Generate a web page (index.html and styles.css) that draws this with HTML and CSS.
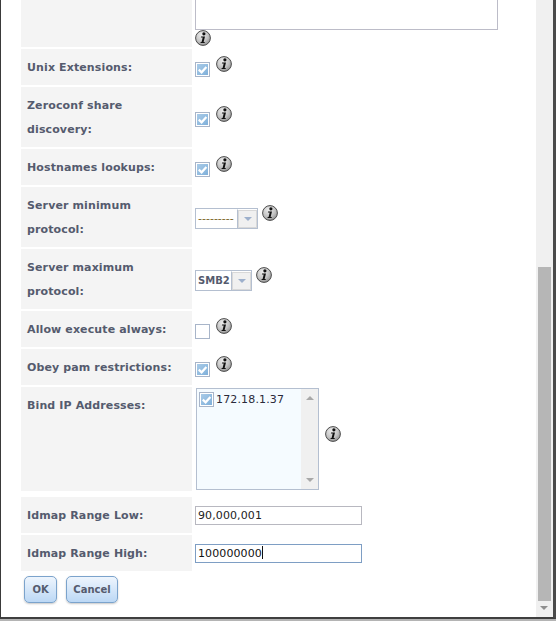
FILE: index.html
```html
<!DOCTYPE html>
<html lang="en">
<head>
    <meta charset="UTF-8">
    <title>CIFS Settings</title>
    <link rel="stylesheet" href="styles.css">
</head>
<body>
    <svg class="defs" width="0" height="0">
        <defs>
            <radialGradient id="infoFill" cx="40%" cy="30%" r="80%">
                <stop offset="0" stop-color="#ececec"/>
                <stop offset="0.55" stop-color="#c4c4c4"/>
                <stop offset="1" stop-color="#858585"/>
            </radialGradient>
            <linearGradient id="tickFill" x1="0" y1="0" x2="1" y2="1">
                <stop offset="0" stop-color="#a9cbe8"/>
                <stop offset="1" stop-color="#7fb0da"/>
            </linearGradient>
            <symbol id="info" viewBox="0 0 16 16">
                <circle cx="8" cy="8" r="7.4" fill="url(#infoFill)" stroke="#4c4c4c" stroke-width="1"/>
                <circle cx="8.9" cy="3.8" r="1.6" fill="#111"/>
                <path d="M6.1 6.4h3.9l-1.4 5.5h1.2l-.2 1H5.5l.2-1h.9l1.1-4.5H5.9z" fill="#111"/>
            </symbol>
            <symbol id="tick" viewBox="0 0 15 15">
                <rect x="0.5" y="0.5" width="14" height="14" fill="#fff" stroke="#a8b5c9"/>
                <rect x="2" y="2" width="11" height="11" fill="url(#tickFill)"/>
                <path d="M3.8 7.6l2.8 2.7 4.8-5.4" fill="none" stroke="#fff" stroke-width="2.2"/>
            </symbol>
        </defs>
    </svg>

    <div class="window">
        <div class="content">
            <div class="row rowFirst">
                <div class="label"></div>
                <div class="field fieldStack">
                    <div class="textarea"></div>
                    <svg class="info infoFlat"><use href="#info"/></svg>
                </div>
            </div>
            <div class="row rowShort">
                <div class="label">Unix Extensions:</div>
                <div class="field">
                    <svg class="check"><use href="#tick"/></svg>
                    <svg class="info"><use href="#info"/></svg>
                </div>
            </div>
            <div class="row rowTall">
                <div class="label">Zeroconf share discovery:</div>
                <div class="field">
                    <svg class="check"><use href="#tick"/></svg>
                    <svg class="info"><use href="#info"/></svg>
                </div>
            </div>
            <div class="row rowShort">
                <div class="label">Hostnames lookups:</div>
                <div class="field">
                    <svg class="check"><use href="#tick"/></svg>
                    <svg class="info"><use href="#info"/></svg>
                </div>
            </div>
            <div class="row rowTall">
                <div class="label">Server minimum protocol:</div>
                <div class="field">
                    <div class="select">
                        <span class="selectText selectWide">---------</span>
                        <span class="selectArrow"><i></i></span>
                    </div>
                    <svg class="info infoSelect"><use href="#info"/></svg>
                </div>
            </div>
            <div class="row rowTall">
                <div class="label">Server maximum protocol:</div>
                <div class="field">
                    <div class="select">
                        <span class="selectText">SMB2</span>
                        <span class="selectArrow"><i></i></span>
                    </div>
                    <svg class="info infoSelect"><use href="#info"/></svg>
                </div>
            </div>
            <div class="row rowShort">
                <div class="label">Allow execute always:</div>
                <div class="field">
                    <span class="checkEmpty"></span>
                    <svg class="info"><use href="#info"/></svg>
                </div>
            </div>
            <div class="row rowShort">
                <div class="label">Obey pam restrictions:</div>
                <div class="field">
                    <svg class="check"><use href="#tick"/></svg>
                    <svg class="info"><use href="#info"/></svg>
                </div>
            </div>
            <div class="row rowList">
                <div class="label labelTop">Bind IP Addresses:</div>
                <div class="field">
                    <div class="list">
                        <div class="listBody">
                            <svg class="listCheck"><use href="#tick"/></svg>
                            <span>172.18.1.37</span>
                        </div>
                        <div class="listBar">
                            <i class="arrowUp"></i>
                            <i class="arrowDown"></i>
                        </div>
                    </div>
                    <svg class="info infoList"><use href="#info"/></svg>
                </div>
            </div>
            <div class="row rowShort rowAfterList">
                <div class="label">Idmap Range Low:</div>
                <div class="field">
                    <div class="input">90,000,001</div>
                </div>
            </div>
            <div class="row rowShort">
                <div class="label">Idmap Range High:</div>
                <div class="field">
                    <div class="input inputFocus">100000000<span class="caret"></span></div>
                </div>
            </div>
            <div class="buttons">
                <button class="btn btnOk">OK</button>
                <button class="btn btnCancel">Cancel</button>
            </div>
        </div>
        <div class="scrollbar">
            <div class="thumb"></div>
            <i class="scrollArrow"></i>
        </div>
    </div>
</body>
</html>
```

FILE: styles.css
```css
* {
    box-sizing: border-box;
}

html, body {
    margin: 0;
    padding: 0;
    height: 100%;
    background: #b4b4b4;
    overflow: hidden;
}

.defs {
    display: block;
    height: 0;
}

.window {
    display: flex;
    width: 556px;
    height: 619px;
    background: #fff;
    border-left: 1px solid #3a3a3a;
    border-right: 3px solid #4a4a4a;
    border-bottom: 2px solid #3f3f3f;
    overflow: hidden;
    font-family: "DejaVu Sans", sans-serif;
    font-size: 11px;
    color: #555b6e;
}

.content {
    width: 535px;
    padding-left: 20px;
}

.scrollbar {
    position: relative;
    width: 17px;
    background: #f0f0f0;
}

.thumb {
    position: absolute;
    top: 267px;
    left: 2px;
    width: 13px;
    height: 334px;
    background: #b6b6b6;
}

.scrollArrow {
    position: absolute;
    top: 606px;
    left: 4px;
    border-left: 4px solid transparent;
    border-right: 4px solid transparent;
    border-top: 4px solid #8f8f8f;
}

.row {
    display: flex;
    margin-bottom: 2px;
}

.rowFirst {
    height: 47px;
}

.rowShort {
    height: 36px;
}

.rowTall {
    height: 60px;
}

.rowList {
    height: 104px;
    margin-bottom: 6px;
}

.label {
    display: flex;
    align-items: center;
    width: 171px;
    padding: 2px 6px 0;
    background: #f4f4f4;
    font-weight: bold;
    line-height: 24px;
    letter-spacing: 0.12px;
}

.labelTop {
    align-items: flex-start;
    padding-top: 7px;
}

.field {
    display: flex;
    align-items: center;
    padding-left: 3px;
}

.fieldStack {
    flex-direction: column;
    align-items: flex-start;
}

.textarea {
    width: 303px;
    height: 30px;
    background: #fff;
    border: 1px solid #bcbcc8;
    border-top: 0;
}

.info {
    width: 16px;
    height: 16px;
    margin-left: 6px;
    margin-bottom: 6px;
}

.infoFlat {
    margin: 0;
}

.infoSelect {
    margin-left: 4px;
    margin-bottom: 8px;
}

.infoList {
    margin-left: 6px;
    margin-bottom: 10px;
}

.check {
    width: 15px;
    height: 15px;
    margin-top: 4px;
}

.checkEmpty {
    width: 15px;
    height: 15px;
    margin-top: 5px;
    background: #fff;
    border: 1px solid #a8b5c9;
}

.select {
    display: flex;
    height: 21px;
    margin-top: 2px;
    background: #fff;
    border: 1px solid #b4bfd0;
}

.selectText {
    width: 35px;
    padding: 0 2px;
    font-size: 10px;
    font-weight: bold;
    line-height: 19px;
}

.selectWide {
    width: 41px;
    font-size: 11px;
    font-weight: normal;
    color: #7a6428;
}

.selectArrow {
    display: flex;
    align-items: center;
    justify-content: center;
    width: 20px;
    border-left: 1px solid #b4bfd0;
    border-top: 1px solid #fff;
    background: #f0f0f0;
    box-shadow: inset 0 0 0 1px #d8d8d8;
}

.selectArrow i {
    border-left: 4px solid transparent;
    border-right: 4px solid transparent;
    border-top: 4px solid #9db0cc;
}

.list {
    display: flex;
    width: 123px;
    height: 102px;
    margin-left: 1px;
    background: #f5fbff;
    border: 1px solid #b4bfd0;
}

.listBody {
    display: flex;
    align-items: flex-start;
    flex: 1;
    padding: 3px 2px;
    color: #2a2a3a;
    line-height: 15px;
    letter-spacing: 0.15px;
}

.listCheck {
    flex: none;
    width: 15px;
    height: 15px;
    margin-right: 2px;
}

.listBar {
    position: relative;
    width: 17px;
    background: #f0f0f0;
}

.arrowUp,
.arrowDown {
    position: absolute;
    left: 5px;
    border-left: 4px solid transparent;
    border-right: 4px solid transparent;
}

.arrowUp {
    top: 7px;
    border-bottom: 4px solid #a8a8a8;
}

.arrowDown {
    bottom: 7px;
    border-top: 4px solid #a8a8a8;
}

.input {
    width: 167px;
    height: 19px;
    padding: 0 2px;
    background: #fff;
    border: 1px solid #b8b8c0;
    color: #222;
    line-height: 17px;
    letter-spacing: 0.1px;
}

.inputFocus {
    border-color: #7e9ec4;
    color: #111;
}

.caret {
    display: inline-block;
    width: 1px;
    height: 13px;
    vertical-align: -2px;
    background: #111;
}

.buttons {
    display: flex;
    gap: 9px;
    padding: 3px 0 0 3px;
}

.btn {
    height: 27px;
    padding: 0;
    border: 1px solid #7ba3cc;
    border-radius: 5px;
    background: linear-gradient(#eef5fd, #bcd8f5);
    box-shadow: 0 1px 2px #c8c8c8;
    color: #555b6e;
    font-family: "DejaVu Sans", sans-serif;
    font-size: 10px;
    font-weight: bold;
}

.btnOk {
    width: 33px;
}

.btnCancel {
    width: 52px;
}
```
